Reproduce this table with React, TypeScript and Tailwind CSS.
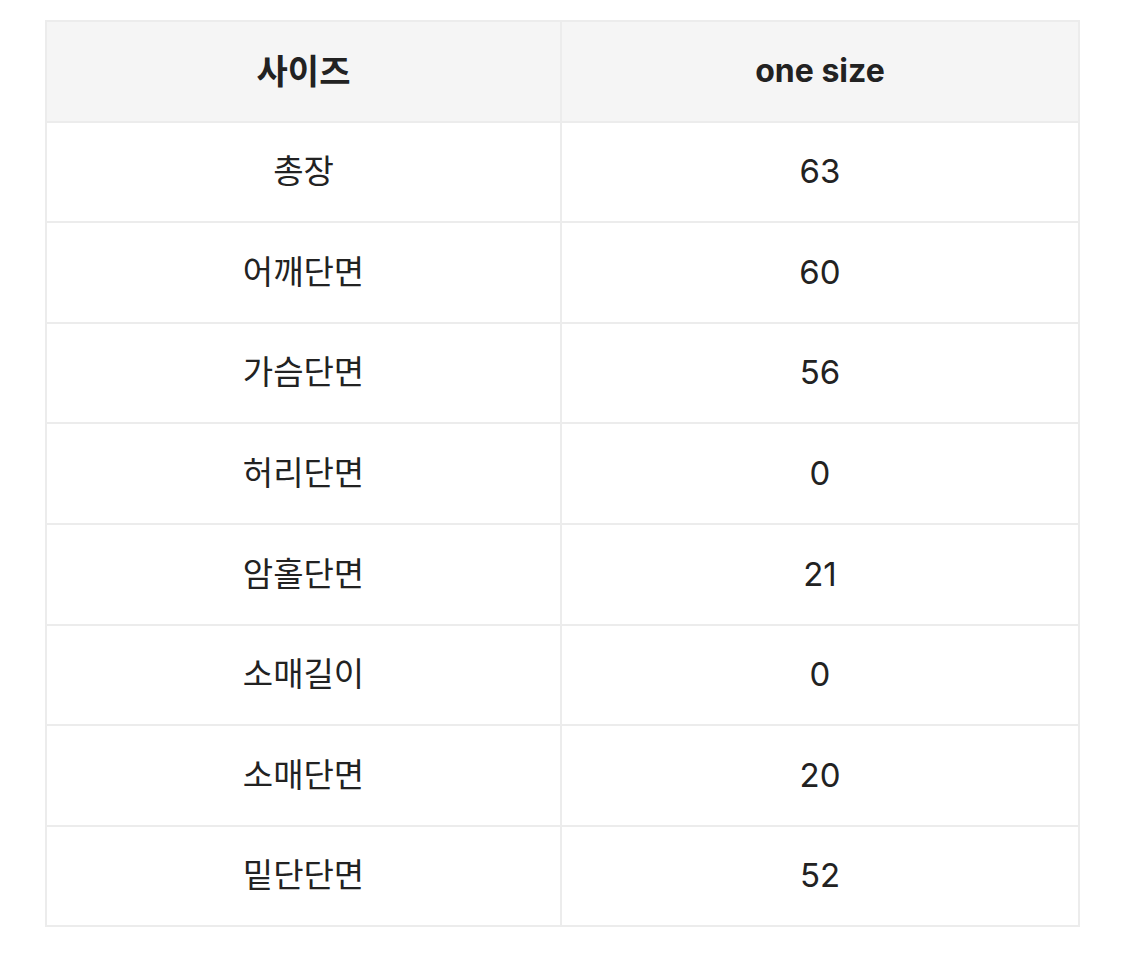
import React from "react";

const rows: [string, string][] = [
  ["총장", "63"],
  ["어깨단면", "60"],
  ["가슴단면", "56"],
  ["허리단면", "0"],
  ["암홀단면", "21"],
  ["소매길이", "0"],
  ["소매단면", "20"],
  ["밑단단면", "52"],
];

export default function App() {
  return (
    <div className="min-h-[957px] bg-white pt-[20px] pl-[45px] font-['Inter','Noto_Sans_CJK_KR',sans-serif] text-[#222]">
      <table className="w-[1035px] table-fixed border-collapse border-2 border-[#ececec] text-center">
        <colgroup>
          <col className="w-[515px]" />
          <col />
        </colgroup>
        <thead>
          <tr className="h-[100.6px] bg-[#f5f5f5]">
            <th className="border-2 border-[#ececec] text-[34px] font-bold">사이즈</th>
            <th className="border-2 border-[#ececec] text-[32px] font-bold">one size</th>
          </tr>
        </thead>
        <tbody>
          {rows.map(([label, value]) => (
            <tr key={label} className="h-[100.6px]">
              <td className="border-2 border-[#ececec] text-[33px]">{label}</td>
              <td className="border-2 border-[#ececec] text-[33px]">{value}</td>
            </tr>
          ))}
        </tbody>
      </table>
    </div>
  );
}
